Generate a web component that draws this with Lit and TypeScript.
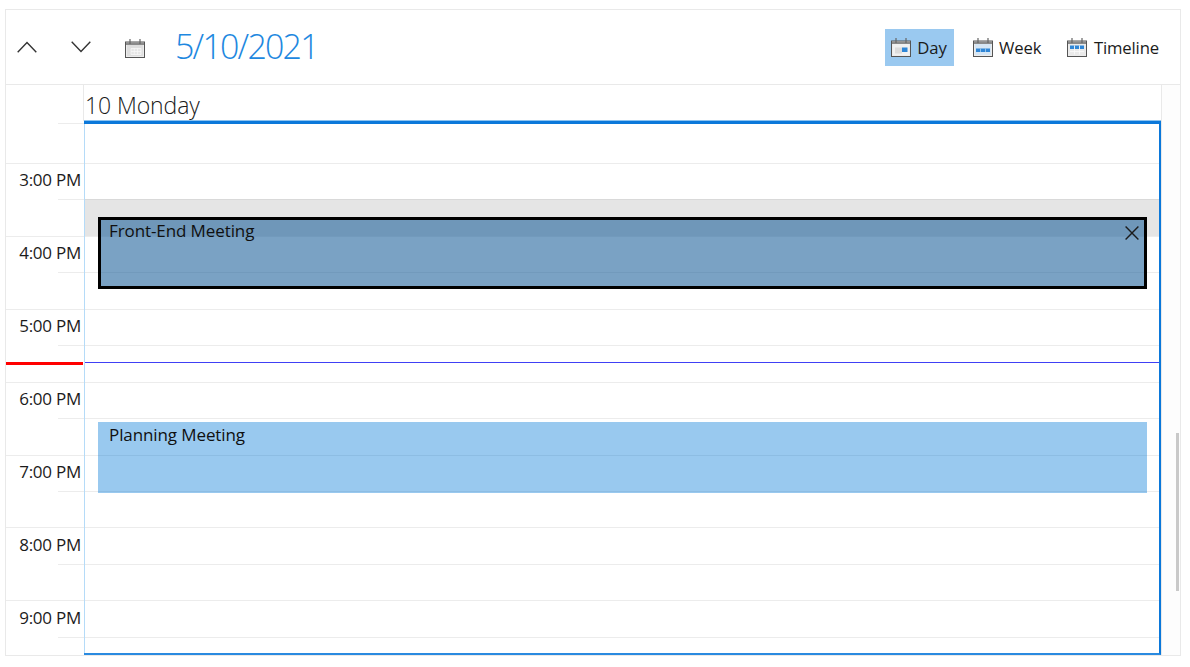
import { LitElement, html, css, svg } from "lit";
import { customElement } from "lit/decorators.js";

type Cal = "none" | "day" | "week" | "timeline";

function calIcon(kind: Cal) {
  const blue = "#2f86d6";
  const pale = "#d6e6f4";
  const cells =
    kind === "day"
      ? svg`<rect x="2" y="6" width="16" height="11" fill="#f1f1f1"/><rect x="4" y="9.5" width="7" height="6" fill="#dcdcdc"/><rect x="11" y="9.5" width="5.5" height="4.5" fill="${blue}"/>`
      : kind === "week"
        ? svg`<rect x="2" y="6" width="16" height="11" fill="${pale}"/><rect x="3" y="10.5" width="14" height="3.5" fill="${blue}"/><path d="M7.5 10.5v3.5M12.5 10.5v3.5" stroke="#a9cfef" stroke-width=".8"/>`
        : kind === "timeline"
          ? svg`<rect x="2" y="6" width="16" height="11" fill="#eaeaea"/><rect x="3" y="7.5" width="14" height="3.5" fill="${blue}"/><path d="M7.5 7.5v9M12.5 7.5v9M3 13.5h14" stroke="#f8f8f8" stroke-width=".9"/>`
          : svg`<rect x="2" y="6" width="16" height="11" fill="#dedede"/><path d="M6 9.5h10v6H6z M9.3 9.5v6M12.6 9.5v6M6 12.5h10" fill="#e6e6e6" stroke="#f7f7f7" stroke-width=".8"/>`;
  return html`<svg class="cal" viewBox="0 0 20 19" width="20" height="19">
    <rect x="0.5" y="3" width="19" height="15.5" fill="#ececec" stroke="#555" stroke-width="1"/>
    <rect x="1" y="3.5" width="18" height="2.5" fill="#8a8a8a"/>
    <path d="M5 0v5M15 0v5" stroke="#666" stroke-width="1.2"/>
    ${cells}
  </svg>`;
}

const HOURS = ["3:00 PM", "4:00 PM", "5:00 PM", "6:00 PM", "7:00 PM", "8:00 PM", "9:00 PM"];
const VIEWS: { label: string; kind: Cal; active?: boolean }[] = [
  { label: "Day", kind: "day", active: true },
  { label: "Week", kind: "week" },
  { label: "Timeline", kind: "timeline" },
];

@customElement("app-root")
export class AppRoot extends LitElement {
  static styles = css`
    :host {
      display: block;
      width: 1190px;
      height: 667px;
      box-sizing: border-box;
      padding: 9px 9px 11px 5px;
      background: #fff;
      font-family: "Open Sans", "Noto Sans", sans-serif;
      color: #1b1b1b;
    }
    .frame {
      height: 100%;
      box-sizing: border-box;
      border: 1px solid #e9e9e9;
      display: flex;
      flex-direction: column;
      overflow: hidden;
    }
    .toolbar {
      height: 75px;
      flex: none;
      box-sizing: border-box;
      border-bottom: 1px solid #e9e9e9;
      display: flex;
      align-items: center;
      padding: 0 14px 0 11px;
    }
    .chev {
      display: block;
      flex: none;
    }
    .chev.down {
      margin-left: 34px;
    }
    .mainwrap {
      margin-left: 34px;
      display: flex;
      position: relative;
      top: 1px;
    }
    .date {
      margin-left: 30px;
      font-size: 34px;
      font-weight: 300;
      letter-spacing: -1.8px;
      color: #1e88e0;
      line-height: 40px;
      position: relative;
      top: -1px;
    }
    .views {
      margin-left: auto;
      display: flex;
      align-items: center;
    }
    .view {
      height: 37px;
      display: flex;
      align-items: center;
      gap: 6.5px;
      padding: 0 7px 0 6px;
      font-size: 16.7px;
      letter-spacing: -0.15px;
      margin-left: 13px;
    }
    .view.active {
      background: #9ac9f0;
    }
    .body {
      flex: 1;
      min-height: 0;
      display: flex;
    }
    .main {
      flex: 1;
      min-width: 0;
      display: flex;
      flex-direction: column;
    }
    .dayhead {
      height: 36px;
      flex: none;
      display: flex;
    }
    .dayhead .gutter {
      width: 78px;
      flex: none;
      box-sizing: border-box;
      border-right: 1px solid #e9e9e9;
    }
    .dayname {
      font-size: 23px;
      font-weight: 300;
      line-height: 40px;
      margin-left: 1px;
      letter-spacing: -0.1px;
      white-space: nowrap;
    }
    .scroller {
      flex: 1;
      min-height: 0;
      display: flex;
    }
    .times {
      width: 78px;
      flex: none;
      position: relative;
      overflow: hidden;
    }
    .lead {
      height: 42px;
      box-sizing: border-box;
      padding-top: 2px;
    }
    .shortline {
      height: 1px;
      margin-left: 52px;
      background: #ececec;
    }
    .hour {
      height: 72.9px;
      box-sizing: border-box;
      border-top: 1px solid #ececec;
    }
    .label {
      height: 35.45px;
      display: flex;
      align-items: center;
      justify-content: flex-end;
      padding-right: 3px;
      font-size: 17px;
      letter-spacing: -0.25px;
      white-space: nowrap;
      position: relative;
      top: -2px;
    }
    .now-red {
      position: absolute;
      left: 0;
      right: 1px;
      top: 241px;
      height: 3px;
      background: #ff0000;
    }
    .day {
      flex: 1;
      min-width: 0;
      position: relative;
      box-sizing: border-box;
      border-top: 3px solid #0b78da;
      border-right: 2px solid #0b78da;
      border-bottom: 2px solid #2a8ae0;
      box-shadow: 0 -1px 0 #8cc3f0;
    }
    .dayinner {
      height: 100%;
      box-sizing: border-box;
      position: relative;
      border-left: 1px solid #b5dbf8;
      overflow: hidden;
    }
    .daylead {
      height: 39px;
    }
    .slot {
      height: 36.45px;
      box-sizing: border-box;
      border-top: 1px solid #ececec;
    }
    .slot.selected {
      background: #e5e5e5;
      border-top-color: #d9d9d9;
    }
    .now-blue {
      position: absolute;
      left: 0;
      right: 0;
      top: 237.5px;
      height: 1px;
      background: #4040f5;
    }
    .appt {
      position: absolute;
      left: 13px;
      width: 1049px;
      box-sizing: border-box;
      font-size: 17px;
      letter-spacing: -0.1px;
      line-height: 20px;
      color: #101010;
      white-space: nowrap;
    }
    .appt.front {
      top: 93px;
      height: 72px;
      background: rgba(26, 95, 153, 0.58);
      border: 3px solid #000;
      padding: 1px 8px;
    }
    .appt.plan {
      top: 298px;
      height: 70.5px;
      background: rgba(0, 120, 215, 0.4);
      padding: 3px 11px;
    }
    .close {
      position: absolute;
      right: 5px;
      top: 6px;
      display: block;
    }
    .track {
      width: 19px;
      flex: none;
      box-sizing: border-box;
      border-left: 1px solid #e9e9e9;
      background: #fdfdfd;
    }
    .thumb {
      width: 3px;
      height: 158px;
      margin: 348px 0 0 14px;
      background: #c9c9c9;
    }
  `;

  render() {
    return html`
      <div class="frame">
        <div class="toolbar">
          <svg class="chev" width="20" height="12" viewBox="0 0 20 12">
            <path d="M0.7 11.2 10 1.6l9.3 9.6" fill="none" stroke="#333" stroke-width="1.4" />
          </svg>
          <svg class="chev down" width="20" height="12" viewBox="0 0 20 12">
            <path d="M0.7 0.8 10 10.4l9.3-9.6" fill="none" stroke="#333" stroke-width="1.4" />
          </svg>
          <span class="mainwrap">${calIcon("none")}</span>
          <div class="date">5/10/2021</div>
          <div class="views">
            ${VIEWS.map(
              (v) => html`<div class="view ${v.active ? "active" : ""}">
                ${calIcon(v.kind)}<span>${v.label}</span>
              </div>`,
            )}
          </div>
        </div>
        <div class="body">
          <div class="main">
            <div class="dayhead">
              <div class="gutter"></div>
              <div class="dayname">10 Monday</div>
            </div>
            <div class="scroller">
              <div class="times">
                <div class="lead"><div class="shortline"></div></div>
                ${HOURS.map(
                  (h) => html`<div class="hour">
                    <div class="label">${h}</div>
                    <div class="shortline"></div>
                  </div>`,
                )}
                <div class="now-red"></div>
              </div>
              <div class="day">
                <div class="dayinner">
                  <div class="daylead"></div>
                  ${Array.from({ length: 14 }, (_, i) => html`<div class="slot ${i === 1 ? "selected" : ""}"></div>`)}
                  <div class="now-blue"></div>
                  <div class="appt front">
                    Front-End Meeting
                    <svg class="close" width="14" height="14" viewBox="0 0 14 14">
                      <path d="M0.6 0.6 13.4 13.4M13.4 0.6 0.6 13.4" stroke="#1c1c1c" stroke-width="1.4" />
                    </svg>
                  </div>
                  <div class="appt plan">Planning Meeting</div>
                </div>
              </div>
            </div>
          </div>
          <div class="track"><div class="thumb"></div></div>
        </div>
      </div>
    `;
  }
}
